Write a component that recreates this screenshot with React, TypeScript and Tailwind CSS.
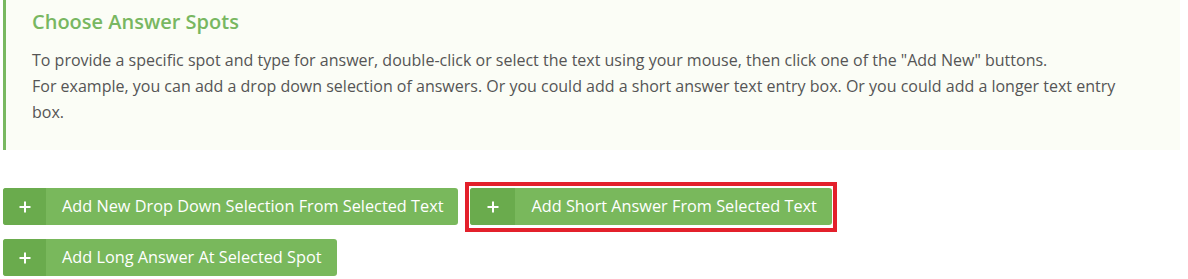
import React from "react";

function PlusIcon() {
  return (
    <svg width="12" height="12" viewBox="0 0 12 12" aria-hidden="true">
      <path d="M6 0.5V11.5M0.5 6H11.5" stroke="#ffffff" strokeWidth="2" fill="none" />
    </svg>
  );
}

function GreenButton({ label, iconW }: { label: string; iconW: string }) {
  return (
    <button
      type="button"
      className="flex h-[37px] items-stretch overflow-hidden rounded-[3px] bg-[#79b85c] text-[16.3px] text-white"
    >
      <span className={`flex items-center justify-center bg-[#6aab4d] ${iconW}`}>
        <PlusIcon />
      </span>
      <span className="flex items-center pl-[16px] pr-[15px] leading-none">{label}</span>
    </button>
  );
}

export default function App() {
  return (
    <div
      className="min-h-[279px] w-[1188px] bg-white pl-[3px]"
      style={{ fontFamily: '"Open Sans", "Liberation Sans", sans-serif' }}
    >
      <div className="mr-[8px] h-[150px] border-l-[3px] border-[#78b860] bg-[#fbfdf6] pl-[26px] pr-[40px] pt-[12px]">
        <h2 className="text-[20px] font-semibold leading-[20px] text-[#78b761]">
          Choose Answer Spots
        </h2>
        <p className="mt-[15px] text-[16px] leading-[26px] text-[#555555]">
          To provide a specific spot and type for answer, double-click or select the text using your
          mouse, then click one of the "Add New" buttons.
          <br />
          For example, you can add a drop down selection of answers. Or you could add a short answer
          text entry box. Or you could add a longer text entry box.
        </p>
      </div>

      <div className="mt-[38px] flex flex-col gap-[14px]">
        <div className="flex gap-[12px]">
          <GreenButton label="Add New Drop Down Selection From Selected Text" iconW="w-[43px]" />
          <div className="relative">
            <GreenButton label="Add Short Answer From Selected Text" iconW="w-[45px]" />
            <div className="pointer-events-none absolute -bottom-[7px] -left-[5px] -right-[5px] -top-[6px] border-[4px] border-[#e3202b]" />
          </div>
        </div>
        <div className="flex">
          <GreenButton label="Add Long Answer At Selected Spot" iconW="w-[43px]" />
        </div>
      </div>
    </div>
  );
}
